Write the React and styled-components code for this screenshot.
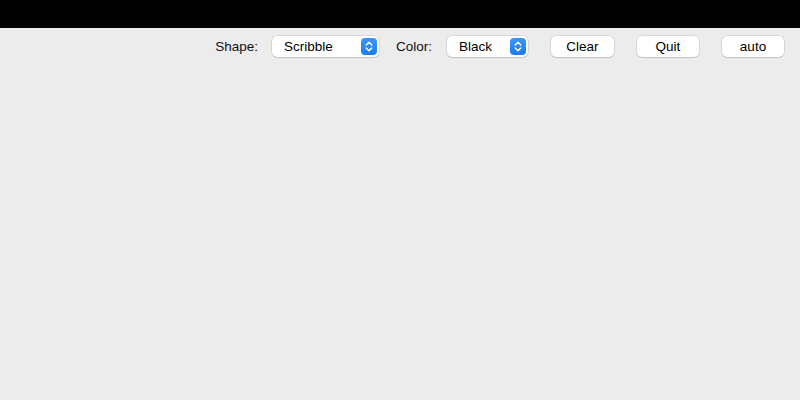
import React from 'react'
import styled, { createGlobalStyle } from 'styled-components'

const Global = createGlobalStyle`
  html, body {
    margin: 0;
    padding: 0;
    background: #ececec;
  }
  body {
    font-family: "Liberation Sans", "DejaVu Sans", Arial, sans-serif;
  }
`

const Window = styled.div`
  width: 800px;
  height: 400px;
  display: flex;
  flex-direction: column;
  background: #ececec;
`

const TitleBar = styled.div`
  height: 28px;
  background: #000;
  flex: none;
`

const Toolbar = styled.div`
  display: flex;
  justify-content: flex-end;
  align-items: center;
  padding: 8px 16px 0 0;
  height: 21px;
`

const Label = styled.span`
  font-size: 13.5px;
  color: #111;
  margin-left: ${p => p.gap || 0}px;
  margin-right: ${p => p.after || 14}px;
`

const Select = styled.div`
  width: ${p => p.w}px;
  height: 21px;
  box-sizing: border-box;
  display: flex;
  align-items: center;
  justify-content: space-between;
  padding: 0 2px 0 12px;
  background: #fff;
  border-radius: 5px;
  box-shadow: 0 0 0 0.5px rgba(0, 0, 0, 0.16), 0 1px 1px rgba(0, 0, 0, 0.1);
  font-size: 13.5px;
  color: #000;
`

const Stepper = styled.div`
  width: 16px;
  height: 17px;
  border-radius: 4px;
  background: linear-gradient(#3b95fc, #1a7cf6);
  display: flex;
  align-items: center;
  justify-content: center;
`

const Button = styled.div`
  width: ${p => p.w || 62}px;
  height: 21px;
  box-sizing: border-box;
  margin-left: 23px;
  display: flex;
  align-items: center;
  justify-content: center;
  background: #fff;
  border-radius: 5px;
  box-shadow: 0 0 0 0.5px rgba(0, 0, 0, 0.16), 0 1px 1px rgba(0, 0, 0, 0.1);
  font-size: 13.5px;
  color: #000;
`

const Canvas = styled.div`
  flex: 1;
`

function Chevrons() {
  return (
    <svg width="8" height="11" viewBox="0 0 8 11" fill="none">
      <path d="M1.2 4 L4 1.3 L6.8 4" stroke="#fff" strokeWidth="1.4" strokeLinecap="round" strokeLinejoin="round" />
      <path d="M1.2 7 L4 9.7 L6.8 7" stroke="#fff" strokeWidth="1.4" strokeLinecap="round" strokeLinejoin="round" />
    </svg>
  )
}

export default function App() {
  return (
    <Window>
      <Global />
      <TitleBar />
      <Toolbar>
        <Label>Shape:</Label>
        <Select w={107}>
          <span>Scribble</span>
          <Stepper><Chevrons /></Stepper>
        </Select>
        <Label gap={17} after={15}>Color:</Label>
        <Select w={81}>
          <span>Black</span>
          <Stepper><Chevrons /></Stepper>
        </Select>
        <Button w={63}>Clear</Button>
        <Button>Quit</Button>
        <Button>auto</Button>
      </Toolbar>
      <Canvas />
    </Window>
  )
}
